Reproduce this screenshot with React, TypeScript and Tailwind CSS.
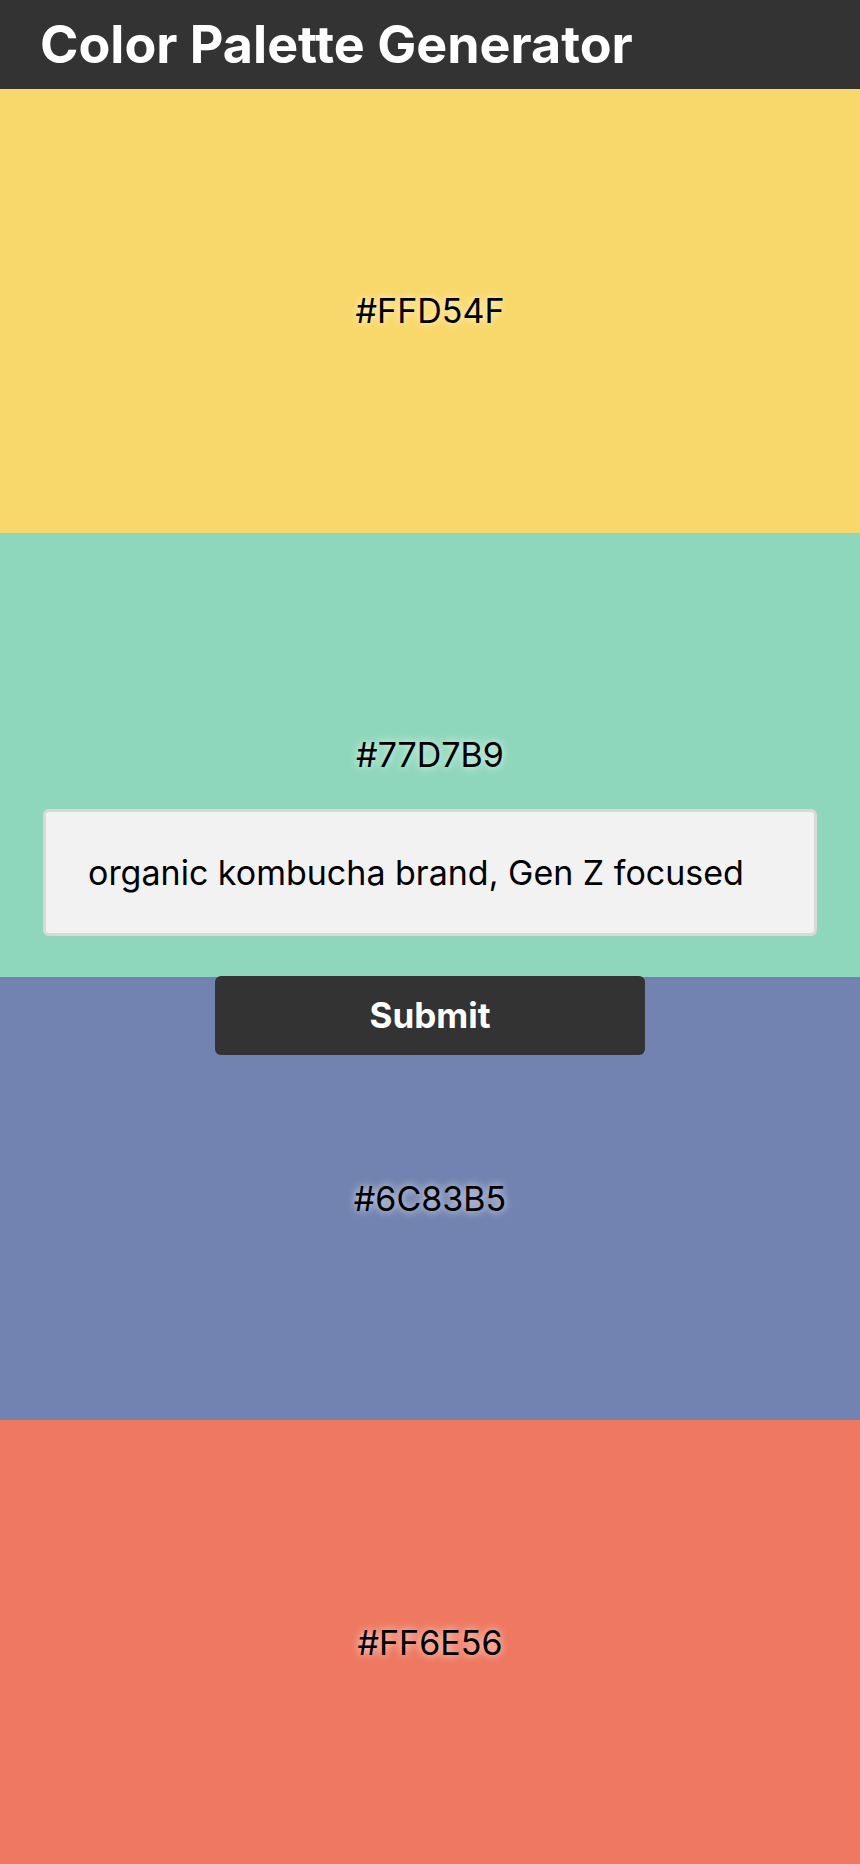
import { useState } from 'react'

const palette = [
  { hex: '#FFD54F', bg: 'bg-[#f8d86a]' },
  { hex: '#77D7B9', bg: 'bg-[#8ed7bc]' },
  { hex: '#6C83B5', bg: 'bg-[#7283b1]' },
  { hex: '#FF6E56', bg: 'bg-[#ee7860]' },
]

export default function App() {
  const [prompt, setPrompt] = useState('organic kombucha brand, Gen Z focused')

  return (
    <div className="relative flex h-screen flex-col font-['Inter',sans-serif]">
      {/* Header */}
      <header className="flex h-[89px] shrink-0 items-center bg-[#333333] px-10">
        <h1 className="text-[52px] font-bold leading-none text-white">Color Palette Generator</h1>
      </header>

      {/* Swatches */}
      {palette.map((c) => (
        <div key={c.hex} className={`flex flex-1 items-center justify-center ${c.bg}`}>
          <span className="text-[34px] text-black [text-shadow:0_0_8px_rgba(255,255,255,0.9)]">
            {c.hex}
          </span>
        </div>
      ))}

      {/* Prompt form */}
      <form
        className="absolute inset-x-0 top-1/2 flex -translate-y-1/2 flex-col items-center gap-10"
        onSubmit={(e) => e.preventDefault()}
      >
        <input
          value={prompt}
          onChange={(e) => setPrompt(e.target.value)}
          className="h-[127px] w-[90%] rounded-md border-[3px] border-[#d9d9d9] bg-[#f2f2f2] px-[42px] text-[34px] text-black outline-none"
        />
        <button
          type="submit"
          className="h-[79px] w-1/2 rounded-md bg-[#333333] text-[35px] font-bold text-white"
        >
          Submit
        </button>
      </form>
    </div>
  )
}
